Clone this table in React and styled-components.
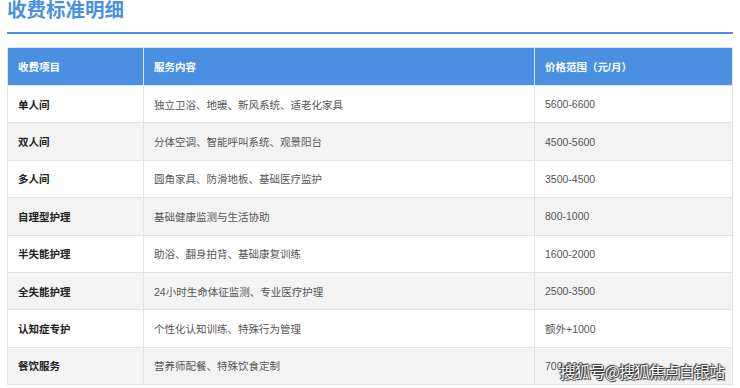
import React from "react";
import styled, { createGlobalStyle } from "styled-components";

const GlobalStyle = createGlobalStyle`
  html, body {
    margin: 0;
    padding: 0;
    background: #ffffff;
    font-family: "Liberation Sans", "Noto Sans CJK SC", sans-serif;
  }
`;

const Page = styled.div`
  position: relative;
  width: 740px;
  height: 388px;
  overflow: hidden;
  padding: 0 7px;
  box-sizing: border-box;
`;

const Title = styled.h2`
  margin: -1px 0 0;
  font-size: 19.5px;
  line-height: 22px;
  font-weight: 700;
  color: #4a90e2;
  padding-bottom: 11px;
  border-bottom: 2px solid #4a90e2;
`;

const Table = styled.table`
  margin-top: 13px;
  width: 726px;
  border-collapse: collapse;
  table-layout: fixed;
  font-size: 10.5px;
`;

const HeadCell = styled.th`
  background: #4a90e2;
  color: #ffffff;
  font-weight: 700;
  text-align: left;
  padding: 0 10px;
  height: 37px;
  border: 1px solid #dde6f2;
  width: ${(p) => p.width};
`;

const Row = styled.tr`
  background: ${(p) => (p.striped ? "#f3f3f3" : "#ffffff")};
`;

const Cell = styled.td`
  padding: 0 10px;
  height: 36.4px;
  border: 1px solid #e2e2e2;
  color: ${(p) => (p.strong ? "#222" : "#555")};
  font-weight: ${(p) => (p.strong ? 700 : 400)};
  white-space: nowrap;
`;

const Watermark = styled.div`
  position: absolute;
  right: 16px;
  bottom: 5px;
  font-family: "Noto Sans CJK SC", sans-serif;
  font-size: 16px;
  letter-spacing: -1px;
  color: #ffffff;
  text-shadow: 0 0 1px #222, 0 0 1px #222, 1px 1px 1px #333, -1px -1px 1px #333;
`;

const rows = [
  ["单人间", "独立卫浴、地暖、新风系统、适老化家具", "5600-6600"],
  ["双人间", "分体空调、智能呼叫系统、观景阳台", "4500-5600"],
  ["多人间", "圆角家具、防滑地板、基础医疗监护", "3500-4500"],
  ["自理型护理", "基础健康监测与生活协助", "800-1000"],
  ["半失能护理", "助浴、翻身拍背、基础康复训练", "1600-2000"],
  ["全失能护理", "24小时生命体征监测、专业医疗护理", "2500-3500"],
  ["认知症专护", "个性化认知训练、特殊行为管理", "额外+1000"],
  ["餐饮服务", "营养师配餐、特殊饮食定制", "700-800"],
];

export default function App() {
  return (
    <Page>
      <GlobalStyle />
      <Title>收费标准明细</Title>
      <Table>
        <thead>
          <tr>
            <HeadCell width="115px">收费项目</HeadCell>
            <HeadCell width="370px">服务内容</HeadCell>
            <HeadCell>价格范围（元/月）</HeadCell>
          </tr>
        </thead>
        <tbody>
          {rows.map((r, i) => (
            <Row key={r[0]} striped={i % 2 === 1}>
              <Cell strong>{r[0]}</Cell>
              <Cell>{r[1]}</Cell>
              <Cell>{r[2]}</Cell>
            </Row>
          ))}
        </tbody>
      </Table>
      <Watermark>搜狐号@搜狐焦点白银站</Watermark>
    </Page>
  );
}
